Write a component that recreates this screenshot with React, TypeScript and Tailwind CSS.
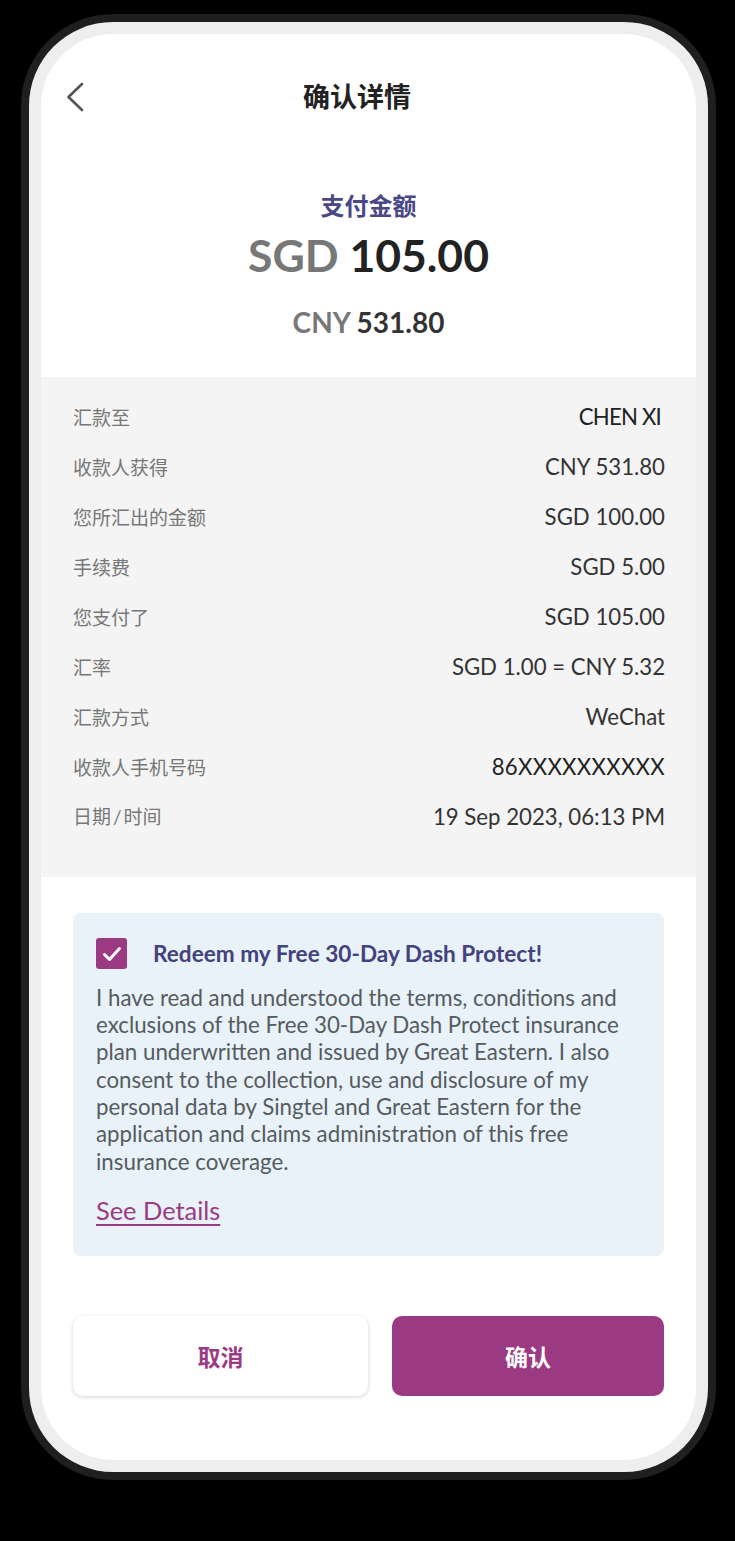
import React from "react";

const rows = [
  { label: "汇款至", value: "CHEN XI", cls: "tracking-[-0.8px] mr-[4px] text-[#222222]" },
  { label: "收款人获得", value: "CNY 531.80" },
  { label: "您所汇出的金额", value: "SGD 100.00" },
  { label: "手续费", value: "SGD 5.00" },
  { label: "您支付了", value: "SGD 105.00" },
  { label: "汇率", value: "SGD 1.00 = CNY 5.32" },
  { label: "汇款方式", value: "WeChat" },
  { label: "收款人手机号码", value: "86XXXXXXXXXX", cls: "tracking-[0.3px] text-[#222222]" },
  { label: "日期/时间", value: "19 Sep 2023, 06:13 PM" },
];

function Label({ text }: { text: string }) {
  if (text === "日期/时间") {
    return (
      <span className="text-[19px] text-[#777777] font-['Noto_Sans_CJK_SC',sans-serif]">
        日期<span className="mx-[2px] font-['Lato',sans-serif]">/</span>时间
      </span>
    );
  }
  return (
    <span className="text-[19px] text-[#777777] font-['Noto_Sans_CJK_SC',sans-serif]">
      {text}
    </span>
  );
}

export default function App() {
  return (
    <div className="w-[735px] h-[1541px] bg-black pt-[14px] pl-[21px] font-['Lato','Noto_Sans_CJK_SC',sans-serif]">
      <div className="w-[695px] h-[1466px] bg-[#1f1f1f] rounded-[92px] p-[8px]">
        <div className="w-full h-full bg-[#eeeeee] rounded-[84px] p-[12px]">
          <div className="w-full h-full bg-white rounded-[72px] overflow-hidden flex flex-col">
            {/* header */}
            <div className="flex items-center h-[38px] mt-[44px] pl-[25px]">
              <svg width="18" height="30" viewBox="0 0 18 30" fill="none">
                <path
                  d="M16 2 L2.5 15 L16 28"
                  stroke="#555555"
                  strokeWidth="2.6"
                  strokeLinecap="round"
                  strokeLinejoin="round"
                />
              </svg>
              <h1 className="ml-[219px] text-[27px] leading-[38px] font-bold text-[#222222]">
                确认详情
              </h1>
            </div>

            {/* amount */}
            <div className="flex flex-col items-center">
              <p className="mt-[74px] text-[24px] leading-[32px] font-semibold text-[#4a4787]">
                支付金额
              </p>
              <p className="mt-[5px] text-[44.5px] leading-[56px] font-bold">
                <span className="text-[#777777]">SGD</span>{" "}
                <span className="text-[#222222]">105.00</span>
              </p>
              <p className="mt-[23px] text-[28px] leading-[32px] font-bold">
                <span className="text-[#777777]">CNY</span>{" "}
                <span className="text-[#333333]">531.80</span>
              </p>
            </div>

            {/* details */}
            <div className="mt-[39px] h-[500px] bg-[#f4f4f4] pt-[15px] pl-[32px] pr-[31px]">
              {rows.map((r) => (
                <div
                  key={r.label}
                  className="flex justify-between items-center h-[50px]"
                >
                  <Label text={r.label} />
                  <span className={"text-[22.2px] " + (r.cls ?? "text-[#333333]")}>
                    {r.value}
                  </span>
                </div>
              ))}
            </div>

            {/* insurance card */}
            <div className="mt-[36px] mx-[32px] h-[343px] bg-[#e8f2f8] rounded-[8px] pt-[24px] px-[23px]">
              <div className="flex items-center gap-[26px]">
                <div className="w-[31px] h-[31px] rounded-[3px] bg-[#9b3a83] flex items-center justify-center">
                  <svg width="24" height="24" viewBox="0 0 24 24" fill="none">
                    <path
                      d="M4.5 12.5 L9.5 17.5 L19.5 6.5"
                      stroke="white"
                      strokeWidth="3"
                      strokeLinecap="round"
                      strokeLinejoin="round"
                    />
                  </svg>
                </div>
                <p className="text-[22.6px] font-bold text-[#44417f]">
                  Redeem my Free 30-Day Dash Protect!
                </p>
              </div>
              <p className="mt-[13px] text-[22.3px] leading-[27.3px] text-[#555b60]">
                I have read and understood the terms, conditions and exclusions
                of the Free 30-Day Dash Protect insurance plan underwritten and
                issued by Great Eastern. I also consent to the collection, use
                and disclosure of my personal data by Singtel and Great Eastern
                for the application and claims administration of this free
                insurance coverage.
              </p>
              <a className="inline-block mt-[18px] text-[25.4px] leading-[34px] text-[#9b3a83] underline underline-offset-[4px] decoration-[1.5px]">
                See Details
              </a>
            </div>

            {/* buttons */}
            <div className="mt-[60px] mx-[32px] flex gap-[24px]">
              <button className="w-[295px] h-[80px] rounded-[10px] bg-white shadow-[0_1px_4px_rgba(0,0,0,0.18)] text-[23px] font-bold text-[#9b3a83] font-['Noto_Sans_CJK_SC',sans-serif]">
                取消
              </button>
              <button className="w-[272px] h-[80px] rounded-[10px] bg-[#9b3a83] text-[23px] font-bold text-white font-['Noto_Sans_CJK_SC',sans-serif]">
                确认
              </button>
            </div>
          </div>
        </div>
      </div>
    </div>
  );
}
